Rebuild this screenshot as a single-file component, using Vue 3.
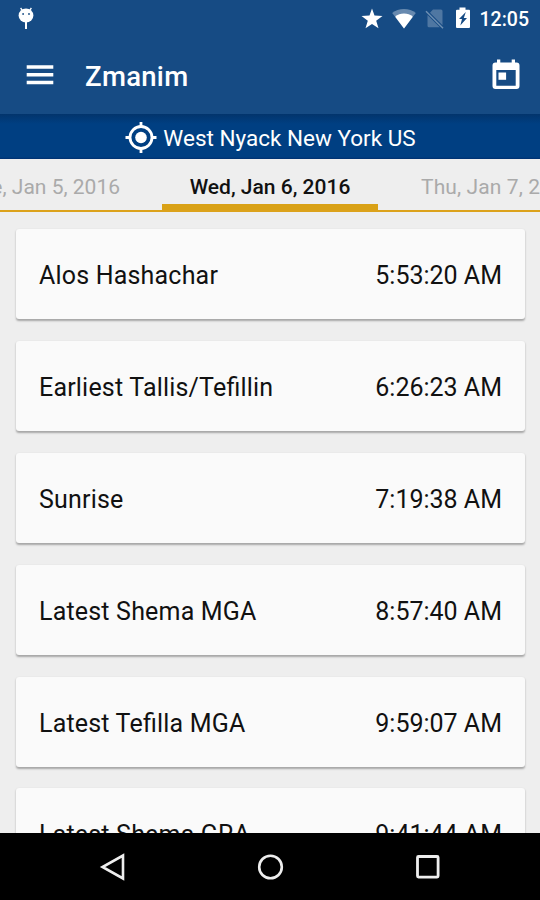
<script setup>
const days = [
  { label: 'Tue, Jan 5, 2016', place: 'previous' },
  { label: 'Wed, Jan 6, 2016', place: 'current' },
  { label: 'Thu, Jan 7, 2016', place: 'next' },
]
const zmanim = [
  { name: 'Alos Hashachar', time: '5:53:20 AM' },
  { name: 'Earliest Tallis/Tefillin', time: '6:26:23 AM' },
  { name: 'Sunrise', time: '7:19:38 AM' },
  { name: 'Latest Shema MGA', time: '8:57:40 AM' },
  { name: 'Latest Tefilla MGA', time: '9:59:07 AM' },
  { name: 'Latest Shema GRA', time: '9:41:44 AM' },
]
</script>

<template>
  <div class="screen">
    <header class="top">
      <div class="status">
        <svg class="droid" width="18" height="24" viewBox="0 0 18 24">
          <path d="M3.6 1 5.8 4M14.4 1 12.2 4" stroke="#fff" stroke-width="1.3" />
          <ellipse cx="9" cy="8.500" rx="7.400" ry="7" fill="#fff" />
          <path d="M9 15v7" stroke="#fff" stroke-width="2" />
          <circle cx="6.1" cy="7" r=".9" fill="#164b84" />
          <circle cx="12" cy="7" r=".9" fill="#164b84" />
        </svg>
        <div class="indicators">
          <svg width="22" height="21" viewBox="0 0 22 21">
            <path fill="#fff" d="M11 .5 13.5 7.6 21.5 7.9 15.2 12.7 17.5 20.3 11 15.9 4.5 20.3 6.8 12.7.5 7.9 8.500 7.600z" />
          </svg>
          <svg class="wifi" width="24" height="20" viewBox="0 0 24 20">
            <path fill="#fff" opacity=".35" d="M12 0C7.500 0 3.300 1.400.2 4L12 19.500 23.800 4C20.700 1.400 16.500 0 12 0z" />
            <path fill="#fff" d="M12 4.600C8.600 4.600 5.600 5.700 3.200 7.800L12 19.500 20.800 7.800C18.400 5.700 15.400 4.600 12 4.600z" />
          </svg>
          <svg class="sim" width="20" height="20" viewBox="0 0 20 20">
            <path fill="#4f77a2" d="M8 .5h8q1.500 0 1.500 1.500V16.200L5 3.700zM2.500 6 14.800 18.300H4q-1.500 0-1.500-1.500z" />
            <path d="M1 2.200 18 19.200" stroke="#6f90b3" stroke-width="1.500" />
          </svg>
          <svg class="battery" width="16" height="22" viewBox="0 0 16 22">
            <path fill="#fff" d="M4.500.5h6V2.700H14q1 0 1 1V20q0 1-1 1H2q-1 0-1-1V3.700q0-1 1-1h2.500z" />
            <path fill="#164b84" d="M10.800 5 4 12h3L5.300 18.500 12 11H8.800z" />
          </svg>
          <span class="clock">12:05</span>
        </div>
      </div>
      <div class="toolbar">
        <svg class="menu" width="28" height="22" viewBox="0 0 28 22">
          <path d="M.700 3h26.600M.700 10.700h26.600M.700 18.400h26.600" stroke="#fff" stroke-width="3.500" />
        </svg>
        <h1>Zmanim</h1>
        <svg class="calendar" width="28" height="32" viewBox="0 0 28 32">
          <path fill="#fff" fill-rule="evenodd" d="M5 .500h3.300v3h11.400v-3H23v3h1.500q3 0 3 3V27q0 3-3 3h-21q-3 0-3-3V6.500q0-3 3-3H5zM4.300 11V26.700H23.700V11z" />
          <path fill="#fff" d="M6.500 13.500h7.600v7.300H6.500z" />
        </svg>
      </div>
    </header>

    <div class="location">
      <svg width="32" height="32" viewBox="0 0 32 32" fill="none" stroke="#fff" stroke-width="2.800">
        <circle cx="16" cy="15.500" r="11" />
        <path d="M16 0V4.500M16 26.500V31M.500 15.500H5M27 15.500H31.500" />
        <circle cx="16" cy="15.500" r="5.800" fill="#fff" stroke="none" />
      </svg>
      <span>West Nyack New York US</span>
    </div>

    <nav class="tabs">
      <span v-for="d in days" :key="d.label" class="tab" :class="d.place">{{ d.label }}</span>
    </nav>

    <main class="list">
      <article v-for="z in zmanim" :key="z.name" class="card">
        <span class="name">{{ z.name }}</span>
        <span>{{ z.time }}</span>
      </article>
    </main>

    <footer class="navbar">
      <svg width="28" height="30" viewBox="0 0 28 30" fill="none" stroke="#eee" stroke-width="2.600">
        <path d="M24 3.500V26.500L3.500 15z" />
      </svg>
      <svg width="28" height="30" viewBox="0 0 28 30" fill="none" stroke="#eee" stroke-width="2.600">
        <circle cx="13.500" cy="15" r="11.300" />
      </svg>
      <svg width="28" height="30" viewBox="0 0 28 30" fill="none" stroke="#eee" stroke-width="2.800">
        <rect x="3.500" y="4.500" width="20.600" height="20.600" rx="1" />
      </svg>
    </footer>
  </div>
</template>

<style>
body {
  margin: 0;
}
</style>

<style scoped>
.screen {
  width: 540px;
  height: 900px;
  overflow: hidden;
  display: flex;
  flex-direction: column;
  background: #eee;
  font-family: Roboto, sans-serif;
  color: #111;
}
svg {
  display: block;
  flex: none;
}
.top {
  flex: none;
  height: 114px;
  background: #164b84;
  color: #fff;
}
.status {
  display: flex;
  justify-content: space-between;
  align-items: center;
  height: 37px;
  padding: 0 11px 0 17px;
  box-sizing: border-box;
}
.droid {
  margin-top: 1px;
}
.indicators {
  display: flex;
  align-items: center;
}
.wifi {
  margin-left: 9px;
}
.sim {
  margin-left: 9px;
}
.battery {
  margin: 0 9px 2px 10px;
}
.clock {
  font-size: 19.500px;
  font-weight: 500;
  line-height: 38px;
  padding-top: 2px;
}
.toolbar {
  display: flex;
  align-items: center;
  height: 77px;
  padding: 0 20px 0 26px;
  box-sizing: border-box;
}
h1 {
  margin: 2px 0 0 31px;
  flex: 1;
  font-size: 27.500px;
  letter-spacing: 0.300px;
  line-height: 32px;
  font-weight: 500;
}
.menu,
.calendar {
  margin-bottom: 2px;
}
.location {
  flex: none;
  height: 45px;
  box-sizing: border-box;
  padding-top: 2px;
  display: flex;
  align-items: center;
  justify-content: center;
  gap: 6px;
  padding-left: 1px;
  background: linear-gradient(#02346c, #003f82 10px, #003f82 43px, #003070);
  color: #fff;
  font-size: 22.500px;
}
.tabs {
  flex: none;
  height: 53px;
  box-sizing: border-box;
  display: grid;
  grid-template-columns: 162px 216px 162px;
  border-bottom: 2px solid #dca21b;
  font-size: 21px;
  line-height: 56px;
  color: #aaa;
  white-space: nowrap;
  overflow: hidden;
}
.tab {
  display: flex;
  height: 51px;
  box-sizing: border-box;
}
.previous {
  justify-content: flex-end;
  padding-right: 42px;
}
.current {
  justify-content: center;
  font-weight: 500;
  color: #111;
  border-bottom: 6px solid #d9a116;
}
.next {
  padding-left: 43px;
  letter-spacing: 0.100px;
}
.list {
  flex: 1;
  min-height: 0;
  overflow: hidden;
  display: flex;
  flex-direction: column;
  gap: 21.880px;
  padding: 17px 15px 0 16px;
}
.card {
  flex: none;
  height: 90px;
  box-sizing: border-box;
  padding: 3px 23px 0;
  display: flex;
  align-items: center;
  justify-content: space-between;
  background: #fafafa;
  border-radius: 3px;
  box-shadow: 0 1.500px 2px rgba(0, 0, 0, 0.300);
  font-size: 25px;
}
.name {
  letter-spacing: 0.190px;
  font-feature-settings: "liga" 1;
}
.navbar {
  flex: none;
  height: 67px;
  display: flex;
  align-items: center;
  justify-content: space-between;
  padding: 0 98px 0 99px;
  background: #000;
}
</style>
